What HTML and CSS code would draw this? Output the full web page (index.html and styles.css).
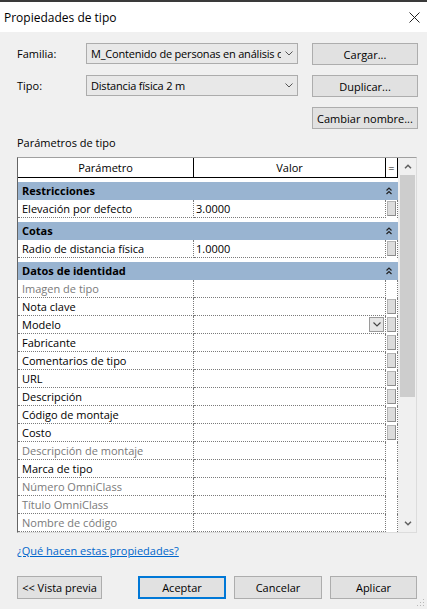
FILE: index.html
```html
<!DOCTYPE html>
<html lang="es">
<head>
<meta charset="utf-8">
<title>Propiedades de tipo</title>
<link rel="stylesheet" href="styles.css">
</head>
<body>
<div class="titlebar">
  <span class="title">Propiedades de tipo</span>
  <svg class="close" viewBox="0 0 11 11" width="11" height="11"><path d="M0.5 0.5 L10.5 10.5 M10.5 0.5 L0.5 10.5" stroke="#222" stroke-width="1" fill="none"/></svg>
</div>
<div class="content">
  <div class="form">
    <span class="label">Familia:</span>
    <div class="combo"><span class="combo-text">M_Contenido de personas en análisis de</span><svg class="chev" viewBox="0 0 8 5" width="8" height="5"><path d="M0.5 0.5 L4 4 L7.5 0.5" stroke="#555" stroke-width="1" fill="none"/></svg></div>
    <button class="btn">Cargar...</button>
    <span class="label">Tipo:</span>
    <div class="combo"><span class="combo-text">Distancia física 2 m</span><svg class="chev" viewBox="0 0 8 5" width="8" height="5"><path d="M0.5 0.5 L4 4 L7.5 0.5" stroke="#555" stroke-width="1" fill="none"/></svg></div>
    <button class="btn">Duplicar...</button>
    <button class="btn col3">Cambiar nombre...</button>
  </div>
  <div class="section-label">Parámetros de tipo</div>
  <div class="frame">
    <div class="grid">
      <div class="hdr">
        <div class="hcell">Parámetro</div>
        <div class="hcell">Valor</div>
        <div class="hcell eq">=</div>
      </div>

      <div class="band"><span class="band-text">Restricciones</span><svg class="dchev" viewBox="0 0 6 8" width="6" height="8"><path d="M0.5 3.5 L3 1 L5.5 3.5 M0.5 7 L3 4.5 L5.5 7" stroke="#222" stroke-width="1.2" fill="none"/></svg></div>
      <div class="row"><div class="cell p">Elevación por defecto</div><div class="cell v">3.0000</div><div class="cell e"><span class="mini"></span></div></div>

      <div class="band"><span class="band-text">Cotas</span><svg class="dchev" viewBox="0 0 6 8" width="6" height="8"><path d="M0.5 3.5 L3 1 L5.5 3.5 M0.5 7 L3 4.5 L5.5 7" stroke="#222" stroke-width="1.2" fill="none"/></svg></div>
      <div class="row"><div class="cell p">Radio de distancia física</div><div class="cell v">1.0000</div><div class="cell e"><span class="mini"></span></div></div>

      <div class="band"><span class="band-text">Datos de identidad</span><svg class="dchev" viewBox="0 0 6 8" width="6" height="8"><path d="M0.5 3.5 L3 1 L5.5 3.5 M0.5 7 L3 4.5 L5.5 7" stroke="#222" stroke-width="1.2" fill="none"/></svg></div>
      <div class="row"><div class="cell p dis">Imagen de tipo</div><div class="cell v"></div><div class="cell e"></div></div>
      <div class="row"><div class="cell p">Nota clave</div><div class="cell v"></div><div class="cell e"><span class="mini"></span></div></div>
      <div class="row"><div class="cell p">Modelo</div><div class="cell v drop-cell"><span class="drop"><svg viewBox="0 0 8 5" width="8" height="5"><path d="M0.5 0.5 L4 4 L7.5 0.5" stroke="#444" stroke-width="1.1" fill="none"/></svg></span></div><div class="cell e"><span class="mini"></span></div></div>
      <div class="row"><div class="cell p">Fabricante</div><div class="cell v"></div><div class="cell e"><span class="mini"></span></div></div>
      <div class="row"><div class="cell p">Comentarios de tipo</div><div class="cell v"></div><div class="cell e"><span class="mini"></span></div></div>
      <div class="row"><div class="cell p">URL</div><div class="cell v"></div><div class="cell e"><span class="mini"></span></div></div>
      <div class="row"><div class="cell p">Descripción</div><div class="cell v"></div><div class="cell e"><span class="mini"></span></div></div>
      <div class="row"><div class="cell p">Código de montaje</div><div class="cell v"></div><div class="cell e"><span class="mini"></span></div></div>
      <div class="row"><div class="cell p">Costo</div><div class="cell v"></div><div class="cell e"><span class="mini"></span></div></div>
      <div class="row"><div class="cell p dis">Descripción de montaje</div><div class="cell v"></div><div class="cell e"></div></div>
      <div class="row"><div class="cell p">Marca de tipo</div><div class="cell v"></div><div class="cell e"></div></div>
      <div class="row"><div class="cell p dis">Número OmniClass</div><div class="cell v"></div><div class="cell e"></div></div>
      <div class="row"><div class="cell p dis">Título OmniClass</div><div class="cell v"></div><div class="cell e"></div></div>
      <div class="row"><div class="cell p dis">Nombre de código</div><div class="cell v"></div><div class="cell e"></div></div>
    </div>
    <div class="scroll">
      <div class="sb-btn"><svg viewBox="0 0 8 5" width="8" height="5"><path d="M1 4.2 L4 1.2 L7 4.2" stroke="#606060" stroke-width="1.5" fill="none"/></svg></div>
      <div class="thumb"></div>
      <div class="track"></div>
      <div class="sb-btn"><svg viewBox="0 0 8 5" width="8" height="5"><path d="M1 0.8 L4 3.8 L7 0.8" stroke="#606060" stroke-width="1.5" fill="none"/></svg></div>
    </div>
  </div>
  <a class="help" href="#">¿Qué hacen estas propiedades?</a>
  <div class="buttons">
    <button class="btn b-prev">&lt;&lt; Vista previa</button>
    <button class="btn b-ok">Aceptar</button>
    <button class="btn b-cancel">Cancelar</button>
    <button class="btn b-apply">Aplicar</button>
  </div>
</div>
<svg class="grip" viewBox="0 0 8 8" width="8" height="8"><g fill="#b8b8b8"><rect x="6" y="0" width="1" height="1"/><rect x="3" y="3" width="1" height="1"/><rect x="6" y="3" width="1" height="1"/><rect x="0" y="6" width="1" height="1"/><rect x="3" y="6" width="1" height="1"/><rect x="6" y="6" width="1" height="1"/></g></svg>
</body>
</html>
```

FILE: styles.css
```css
* { box-sizing: border-box; }

body {
  margin: 0;
  width: 427px;
  height: 609px;
  overflow: hidden;
  background: #f0f0f0;
  font-family: "Open Sans", "Noto Sans", sans-serif;
  font-size: 11px;
  color: #000;
  position: relative;
}

.titlebar {
  height: 32px;
  background: #fff;
  border-top: 2px solid #3a3a3a;
  display: flex;
  align-items: center;
  justify-content: space-between;
  padding: 0 7px 0 4px;
}

.title {
  font-size: 12px;
  margin-top: 1px;
}

.close { display: block; }

.content {
  padding: 11px 9px 0 17px;
}

.form {
  display: grid;
  grid-template-columns: 55px 212px 106px;
  column-gap: 14px;
  row-gap: 10px;
  grid-auto-rows: 22px;
  align-items: center;
}

.label { line-height: 14px; }

.combo {
  height: 21px;
  align-self: start;
  background: #e8e8e8;
  border: 1px solid #acacac;
  display: flex;
  align-items: center;
  padding: 0 4px 0 4px;
  overflow: hidden;
}

.combo-text {
  flex: 1;
  white-space: nowrap;
  overflow: hidden;
  line-height: 14px;
  letter-spacing: -0.2px;
}

.chev { flex: none; margin-left: 4px; display: block; }

.btn {
  font-family: "Open Sans", "Noto Sans", sans-serif;
  font-size: 11px;
  color: #000;
  background: #e1e1e1;
  border: 1px solid #adadad;
  height: 22px;
  padding: 0;
  margin: 0;
}

.col3 { grid-column: 3; }

.section-label {
  margin-top: 7px;
  line-height: 14px;
}

.frame {
  margin-top: 7px;
  width: 400px;
  display: flex;
  border: 1px solid;
  border-color: #a0a0a0 #dcdcdc #dcdcdc #646464;
}

.grid {
  width: 380px;
  background: #fff;
}

.hdr {
  display: grid;
  grid-template-columns: 176px 192px 12px;
  height: 20px;
  border-bottom: 1px solid #000;
}

.hcell {
  border-right: 1px solid #000;
  display: flex;
  align-items: center;
  justify-content: center;
  line-height: 14px;
}

.band {
  margin-top: 4px;
  height: 18px;
  background: #99b4d1;
  display: flex;
  align-items: center;
}

.band-text {
  width: 368px;
  padding-left: 4px;
  font-weight: bold;
  line-height: 14px;
}

.dchev { display: block; }

.row {
  display: grid;
  grid-template-columns: 176px 192px 12px;
  height: 18px;
}

.cell {
  border-right: 1px dotted #7a7a7a;
  line-height: 17px;
  white-space: nowrap;
  overflow: hidden;
}

.cell.p,
.cell.v {
  border-bottom: 1px dotted #7a7a7a;
}

.cell.p { padding-left: 4px; }
.cell.v { padding-left: 2px; }

.cell.dis { color: #7a7a7a; }

.cell.e {
  display: flex;
  align-items: flex-start;
  padding: 1px 0 0 1px;
}

.mini {
  display: block;
  width: 9px;
  height: 15px;
  background: #dcdcdc;
  border: 1px solid #b4b4b4;
  border-right-color: #8c8c8c;
  border-bottom-color: #8c8c8c;
}

.drop-cell {
  display: flex;
  justify-content: flex-end;
  padding: 1px 1px 0 0;
}

.drop {
  width: 15px;
  height: 15px;
  background: #e6e6e6;
  border: 1px solid #9a9a9a;
  display: flex;
  align-items: center;
  justify-content: center;
}

.drop svg { display: block; }

.scroll {
  width: 18px;
  background: #f0f0f0;
  display: flex;
  flex-direction: column;
}

.sb-btn {
  height: 17px;
  display: flex;
  align-items: center;
  justify-content: center;
  padding-left: 1px;
}

.sb-btn svg { display: block; }

.thumb {
  height: 222px;
  background: #cdcdcd;
  margin: 0 1px 0 2px;
}

.track { flex: 1; }

.help {
  display: inline-block;
  margin-top: 11px;
  color: #0066cc;
  text-decoration: underline;
  line-height: 14px;
}

.buttons {
  display: flex;
  margin-top: 18px;
  width: 400px;
}

.buttons .btn { height: 23px; }

.b-prev { width: 85px; }
.b-ok {
  width: 88px;
  margin-left: 36px;
  border-color: #0078d7;
  box-shadow: inset 0 0 0 1px #0078d7;
}
.b-cancel { width: 88px; margin-left: 8px; }
.b-apply { width: 87px; margin-left: 8px; }

.grip {
  position: absolute;
  right: 2px;
  bottom: 2px;
}
```
